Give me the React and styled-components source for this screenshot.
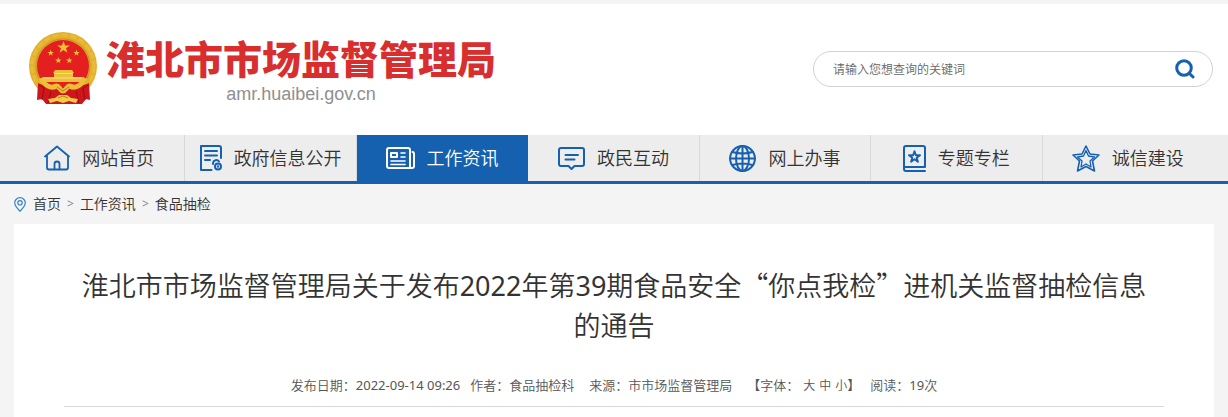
import React from 'react';
import styled, { createGlobalStyle } from 'styled-components';

const GlobalStyle = createGlobalStyle`
  * {
    box-sizing: border-box;
  }

  body {
    margin: 0;
    background: #f4f4f4;
    color: #333;
    font-family: 'Noto Sans', 'Noto Sans CJK SC', sans-serif;
    font-size: 14px;
    font-weight: 350;
  }

  a {
    color: inherit;
    text-decoration: none;
  }
`;

const Container = styled.div`
  max-width: 1200px;
  margin: 0 14px;

  @media (min-width: 1229px) {
    margin: 0 auto;
  }
`;

const Header = styled.header`
  margin-top: 4px;
  background: #fff;
`;

const HeaderInner = styled(Container)`
  display: flex;
  align-items: flex-start;
  justify-content: space-between;
  padding: 28px 1px 29px 15px;
`;

const Brand = styled.a`
  display: flex;
  gap: 8px;
`;

const BrandText = styled.div`
  display: flex;
  flex-direction: column;
  align-items: center;
`;

const SiteName = styled.span`
  color: #d92e2e;
  font-family: 'Noto Sans CJK SC', sans-serif;
  font-size: 39px;
  font-weight: 900;
  line-height: 50px;
  white-space: nowrap;
`;

const SiteDomain = styled.span`
  color: #8f8f8f;
  font-family: 'Liberation Sans', sans-serif;
  font-size: 18px;
  font-weight: 400;
  line-height: 24px;
`;

const SearchForm = styled.form`
  display: flex;
  align-items: center;
  width: 400px;
  height: 36px;
  margin-top: 19px;
  padding: 0 17px 0 19px;
  border: 1px solid #d2d2d2;
  border-radius: 18px;
`;

const SearchInput = styled.input`
  flex: 1;
  min-width: 0;
  padding: 0;
  border: 0;
  outline: 0;
  background: none;
  font-family: inherit;
  font-size: 12px;
  font-weight: inherit;

  &::placeholder {
    color: #666;
    opacity: 1;
  }
`;

const SearchButton = styled.button`
  display: flex;
  padding: 0;
  border: 0;
  background: none;
  color: #1660b0;
  cursor: pointer;
`;

const Nav = styled.nav`
  border-bottom: 3px solid #1660b0;
  background: #ededed;
`;

const NavList = styled(Container)`
  display: flex;
`;

const NavItem = styled.a`
  display: flex;
  flex: 1 1 0;
  align-items: center;
  justify-content: center;
  gap: 12px;
  height: 46px;
  border-right: 1px solid ${props => (props.$active ? '#1660b0' : '#d8d8d8')};
  background: ${props => (props.$active ? '#1660b0' : 'transparent')};
  color: ${props => (props.$active ? '#fff' : '#333')};
  font-size: 18px;
  line-height: 26px;
  white-space: nowrap;

  &:last-child {
    border-right-color: transparent;
  }

  svg {
    flex: none;
    color: ${props => (props.$active ? '#fff' : '#1660b0')};
  }
`;

const Breadcrumb = styled(Container)`
  display: flex;
  align-items: center;
  gap: 6px;
  height: 40px;
  line-height: 20px;

  svg {
    margin-right: 1px;
  }
`;

const Separator = styled.span`
  color: #888;
  font-size: 12px;
  font-weight: 400;
`;

const Article = styled(Container)`
  padding: 41px 50px 10px;
  background: #fff;
`;

const Title = styled.h1`
  margin: 0;
  padding: 0 10px;
  font-size: 27px;
  font-weight: 350;
  line-height: 40px;
  text-align: center;
`;

const Quote = styled.span`
  font-family: 'Noto Sans CJK SC', sans-serif;
`;

const Digits = styled.span`
  font-weight: 400;
`;

const Meta = styled.div`
  display: flex;
  flex-wrap: wrap;
  justify-content: center;
  margin-top: 29px;
  padding-bottom: 10px;
  border-bottom: 1px solid #d8d8d8;
  color: #555;
  font-size: 13px;
  line-height: 20px;
`;

const MetaItem = styled.span`
  margin-right: ${props => props.$gap || 0}px;
`;

const SizeButton = styled.button`
  margin: 0 4px 0 0;
  padding: 0;
  border: 0;
  background: none;
  color: inherit;
  font: inherit;
  font-size: 12px;
  cursor: pointer;

  &:first-of-type {
    margin-left: 4px;
  }

  &:last-of-type {
    margin-right: 0;
  }
`;

const STAR = 'M0-10 2.4-3.1 9.5-3.1 3.8 1.2 5.9 8.1 0 3.9-5.9 8.1-3.8 1.2-9.5-3.1-2.4-3.1Z';

const Emblem = () => (
  <svg width="69" height="72" viewBox="0 0 69 72" aria-hidden="true">
    <circle cx="34" cy="34" r="34" fill="#e2b02f" />
    <circle cx="34" cy="34" r="31" fill="none" stroke="#eabb38" strokeWidth="3" strokeDasharray="7 2" />
    <circle cx="34" cy="34" r="27" fill="none" stroke="#c9921f" />
    <circle cx="34" cy="34" r="26" fill="#e31f1f" />
    <g fill="#eec03a">
      <path d={STAR} transform="translate(34.5 15.5) scale(.66)" />
      <path d={STAR} transform="translate(21.7 21) scale(.34)" />
      <path d={STAR} transform="translate(47.5 21) scale(.34)" />
      <path d={STAR} transform="translate(29.3 28.5) scale(.34)" />
      <path d={STAR} transform="translate(40.3 28.5) scale(.34)" />
      <path d="M26 38h17l2 3H24ZM25 41h19v4H25ZM14 45h41l1 5H13Z" />
    </g>
    <path d="M25 41.5h19M15 46h39" stroke="#fae27e" fill="none" />
    <path d="M9 51c6 3 12 3 17 3l4 5h9l4-5c5 0 11 0 17-3l1 17-4-1-4 5H17l-4-5-5 1Z" fill="#cf161b" />
    <path d="M12 46c4 8 10 11 15 8 3-1 4 5 7 5s4-6 7-5c5 3 11 0 15-8" fill="none" stroke="#ecbe39" strokeWidth="5" />
    <path d="M10 53l5 3-2 12M22 59l-3 12M59 53l-5 3 2 12M47 59l3 12" stroke="#970d14" fill="none" />
    <path d="M19 67l7-1 4-3h8l4 3 7 1-2 4-7-2-6 2-6-2-7 2Z" fill="#f2cc49" />
    <path d="M28 55l6 4 6-4M29 66l5-2 5 2" stroke="#b97e18" fill="none" />
  </svg>
);

const icon = {
  fill: 'none',
  stroke: 'currentColor',
  strokeWidth: 2,
  strokeLinecap: 'round',
  strokeLinejoin: 'round',
  'aria-hidden': true,
};

const SearchIcon = () => (
  <svg {...icon} width="20" height="20" viewBox="0 0 20 20" strokeWidth="3">
    <circle cx="9" cy="9" r="7.3" />
    <path d="M14.5 14.5 18 18" />
  </svg>
);

const HomeIcon = () => (
  <svg {...icon} width="26" height="26" viewBox="0 0 26 26" strokeWidth="1.8">
    <path d="M1 11.5 13 1.5 25 11.5M3 10.5V22.5Q3 24.5 5 24.5H22Q24 24.5 24 22.5V10.5" />
    <path d="M10.5 24V19Q10.5 16.5 13 16.5T15.5 19V24" />
  </svg>
);

const InfoIcon = () => (
  <svg {...icon} width="22" height="26" viewBox="0 0 22 26">
    <path d="M21 13V3Q21 1 19 1H1V25H11.5M5 6H17M5 10.5H17M5 15H10" />
    <path d="M13 19V18A3.3 3.3 0 0 1 19 16.5" />
    <circle cx="18" cy="21.5" r="3" />
    <path d="M18 21.2v.6" />
  </svg>
);

const NewsIcon = () => (
  <svg {...icon} width="29" height="22" viewBox="0 0 29 22">
    <path d="M24 20V3Q24 1 22 1H3Q1 1 1 3V19Q1 21 3 21H26Q28 21 28 19V7Q28 5 26.5 5" />
    <rect x="5" y="6" width="6" height="4" />
    <path d="M15 6h4M15 10h4M5 14h14M5 17.5h14" strokeWidth="1.6" />
  </svg>
);

const ChatIcon = () => (
  <svg {...icon} width="27" height="23" viewBox="0 0 27 23">
    <path d="M3 1H24Q26 1 26 3V17Q26 19 24 19H16.5L13.5 22 10.5 19H3Q1 19 1 17V3Q1 1 3 1Z" />
    <path d="M7.5 8H20M7.5 12.5H16.5" />
  </svg>
);

const GlobeIcon = () => (
  <svg {...icon} width="27" height="27" viewBox="0 0 27 27">
    <circle cx="13.5" cy="13.5" r="12.4" />
    <ellipse cx="13.5" cy="13.5" rx="6.5" ry="12.4" />
    <path d="M13.5 1V26M1 13.5H26M3.5 7Q13.5 10 23.5 7M3.5 20Q13.5 17 23.5 20" />
  </svg>
);

const TopicIcon = () => (
  <svg {...icon} width="23" height="27" viewBox="0 0 23 27">
    <path d="M22 22V3Q22 1 20 1H3Q1 1 1 3V24Q1 26 3 26H22M2 22H22" />
    <path d={STAR} transform="translate(11.5 12) scale(.58)" strokeWidth="3.4" />
  </svg>
);

const TrustIcon = () => (
  <svg {...icon} width="28" height="27" viewBox="0 0 28 27">
    <path d="M14 1 18 9 27 10 20.5 16 22.5 26 14 21.5 5.5 26 7.5 16 1 10 10 9Z" strokeWidth="1.6" />
    <path d="M14 5.5 16.5 11 22.5 12 18 16 19 22 14 19 9 22 10 16 5.5 12 11.5 11Z" strokeWidth="1.3" />
  </svg>
);

const PinIcon = () => (
  <svg {...icon} width="12" height="15" viewBox="0 0 12 15" stroke="#3384bf" strokeWidth="1.2">
    <path d="M6 14.2Q.7 9 .7 5.8A5.3 5.1 0 0 1 11.3 5.8Q11.3 9 6 14.2Z" />
    <circle cx="6" cy="5.8" r="2.2" />
  </svg>
);

const navItems = [
  { label: '网站首页', Icon: HomeIcon },
  { label: '政府信息公开', Icon: InfoIcon },
  { label: '工作资讯', Icon: NewsIcon, active: true },
  { label: '政民互动', Icon: ChatIcon },
  { label: '网上办事', Icon: GlobeIcon },
  { label: '专题专栏', Icon: TopicIcon },
  { label: '诚信建设', Icon: TrustIcon },
];

const App = () => {
  return (
    <>
      <GlobalStyle />
      <Header>
        <HeaderInner>
          <Brand href="#">
            <Emblem />
            <BrandText>
              <SiteName>淮北市市场监督管理局</SiteName>
              <SiteDomain>amr.huaibei.gov.cn</SiteDomain>
            </BrandText>
          </Brand>
          <SearchForm role="search">
            <SearchInput type="text" aria-label="请输入您想查询的关键词" placeholder="请输入您想查询的关键词" />
            <SearchButton type="button" aria-label="搜索">
              <SearchIcon />
            </SearchButton>
          </SearchForm>
        </HeaderInner>
      </Header>
      <Nav>
        <NavList>
          {navItems.map(({ label, Icon, active }) => (
            <NavItem key={label} href="#" $active={active}>
              <Icon />
              {label}
            </NavItem>
          ))}
        </NavList>
      </Nav>
      <Breadcrumb>
        <PinIcon />
        <a href="#">首页</a>
        <Separator>&gt;</Separator>
        <a href="#">工作资讯</a>
        <Separator>&gt;</Separator>
        <a href="#">食品抽检</a>
      </Breadcrumb>
      <Article as="article">
        <Title>
          淮北市市场监督管理局关于发布<Digits>2022</Digits>年第<Digits>39</Digits>期食品安全
          <Quote>“你点我检”</Quote>进机关监督抽检信息的通告
        </Title>
        <Meta>
          <MetaItem $gap={10}>
            发布日期：<Digits>2022-09-14 09:26</Digits>
          </MetaItem>
          <MetaItem $gap={15}>作者：食品抽检科</MetaItem>
          <MetaItem $gap={15}>来源：市市场监督管理局</MetaItem>
          <MetaItem $gap={10}>
            【字体：
            <SizeButton type="button">大</SizeButton>
            <SizeButton type="button">中</SizeButton>
            <SizeButton type="button">小</SizeButton>】
          </MetaItem>
          <MetaItem>
            阅读：<Digits>19</Digits>次
          </MetaItem>
        </Meta>
      </Article>
    </>
  );
};

export default App;
